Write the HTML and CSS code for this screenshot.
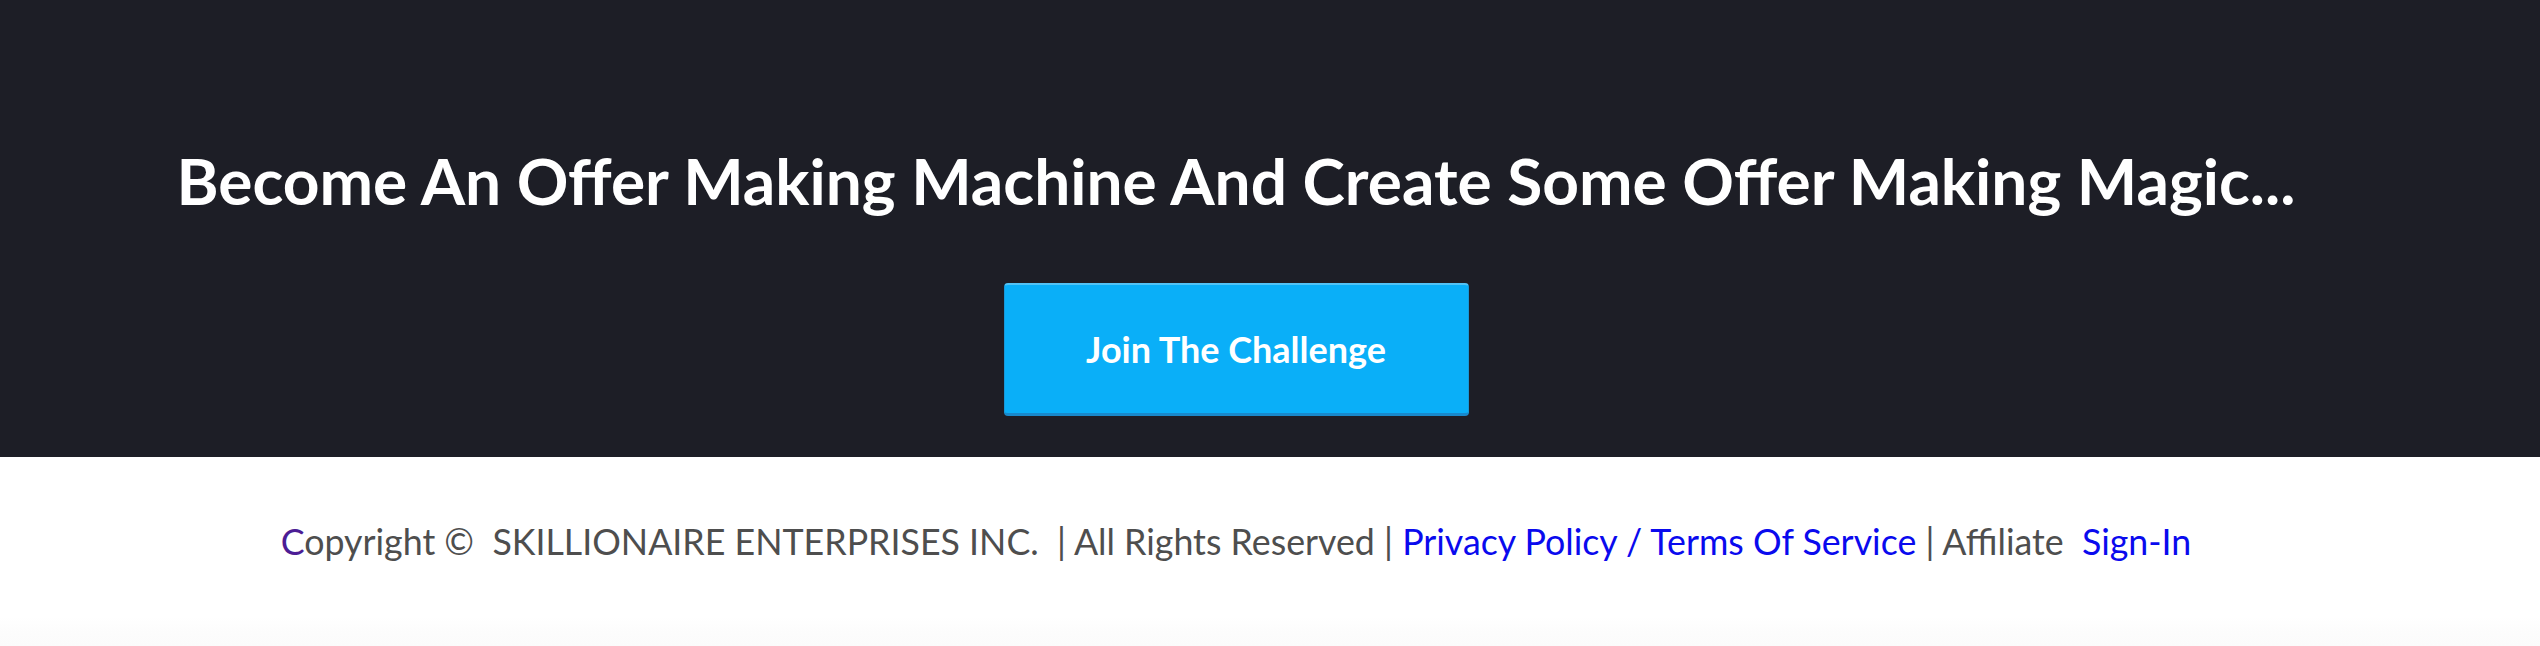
FILE: index.html
```html
<!DOCTYPE html>
<html lang="en">
<head>
<meta charset="utf-8">
<title>Offer Making Machine</title>
<link rel="stylesheet" href="styles.css">
</head>
<body>
<section class="hero">
  <h1 class="hero-title">Become An Offer Making Machine And Create Some Offer Making Magic...</h1>
  <a class="cta" href="#">Join The Challenge</a>
</section>
<footer class="footer">
  <p class="footer-text"><span class="first">C</span>opyright ©&nbsp; SKILLIONAIRE ENTERPRISES INC.&nbsp; | All Rights Reserved | <a class="link" href="#">Privacy Policy / Terms Of Service</a> | Affiliate&nbsp; <a class="link" href="#">Sign-In</a></p>
</footer>
</body>
</html>
```

FILE: styles.css
```css
html, body {
  margin: 0;
  padding: 0;
  background: #ffffff;
}

body {
  font-family: Lato, "Open Sans", sans-serif;
  width: 2540px;
  height: 646px;
  overflow: hidden;
}

.hero {
  box-sizing: border-box;
  height: 457px;
  background: #1d1e26;
  display: flex;
  flex-direction: column;
  align-items: center;
  padding: 143px 68px 0 0;
}

.hero-title {
  margin: 0;
  font-size: 64px;
  font-weight: 700;
  line-height: 1.2;
  color: #ffffff;
  text-align: center;
  white-space: nowrap;
}

.cta {
  box-sizing: border-box;
  margin-top: 63px;
  width: 465px;
  height: 133px;
  display: flex;
  align-items: center;
  justify-content: center;
  background: #0aaff8;
  border-top: 2px solid #52c3f6;
  border-bottom: 3px solid #1889cc;
  border-left: 1px solid #1898d8;
  border-right: 1px solid #1898d8;
  border-radius: 4px;
  color: #ffffff;
  font-size: 36px;
  font-weight: 700;
  text-decoration: none;
}

.footer {
  box-sizing: border-box;
  height: 189px;
  padding: 64px 68px 0 0;
  background: linear-gradient(#ffffff 0, #ffffff 160px, #fcfcfc 176px, #fbfbfb 100%);
}

.footer-text {
  margin: 0;
  text-align: center;
  font-size: 35.75px;
  line-height: 1.2;
  color: #4e4e4e;
  white-space: nowrap;
}

.first {
  color: #4c1d95;
}

.link {
  color: #0a0aee;
  text-decoration: none;
}
```
